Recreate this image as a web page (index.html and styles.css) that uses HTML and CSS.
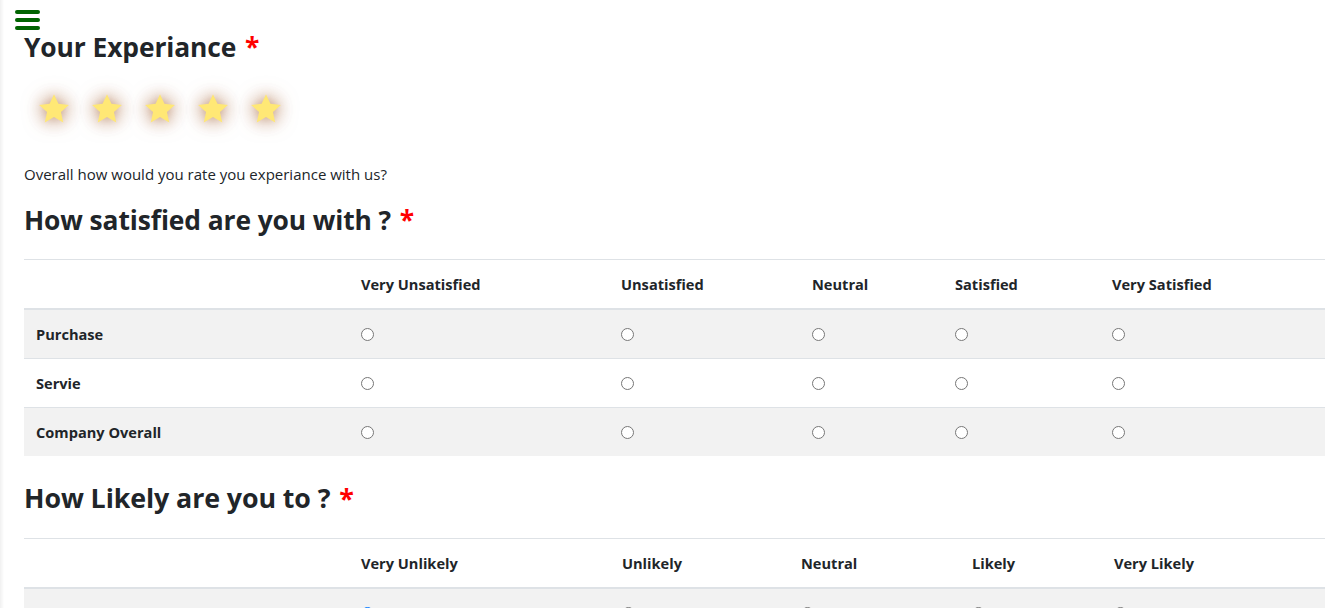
FILE: index.html
```html
<!DOCTYPE html>
<html lang="en">
<head>
<meta charset="utf-8">
<title>Feedback</title>
<link rel="stylesheet" href="styles.css">
</head>
<body>
<div class="edge-shadow"></div>
<button class="menu-toggle" aria-label="Menu">
  <span class="bar"></span><span class="bar"></span><span class="bar"></span>
</button>
<main class="page">
  <h3 class="title">Your Experiance <span class="req">*</span></h3>
  <div class="stars">
    <svg class="star" viewBox="0 0 24 24"><polygon points="12,1.5 15.1,8.3 22.5,9.1 16.9,14.1 18.5,21.5 12,17.7 5.5,21.5 7.1,14.1 1.5,9.1 8.9,8.3"/></svg>
    <svg class="star" viewBox="0 0 24 24"><polygon points="12,1.5 15.1,8.3 22.5,9.1 16.9,14.1 18.5,21.5 12,17.7 5.5,21.5 7.1,14.1 1.5,9.1 8.9,8.3"/></svg>
    <svg class="star" viewBox="0 0 24 24"><polygon points="12,1.5 15.1,8.3 22.5,9.1 16.9,14.1 18.5,21.5 12,17.7 5.5,21.5 7.1,14.1 1.5,9.1 8.9,8.3"/></svg>
    <svg class="star" viewBox="0 0 24 24"><polygon points="12,1.5 15.1,8.3 22.5,9.1 16.9,14.1 18.5,21.5 12,17.7 5.5,21.5 7.1,14.1 1.5,9.1 8.9,8.3"/></svg>
    <svg class="star" viewBox="0 0 24 24"><polygon points="12,1.5 15.1,8.3 22.5,9.1 16.9,14.1 18.5,21.5 12,17.7 5.5,21.5 7.1,14.1 1.5,9.1 8.9,8.3"/></svg>
  </div>
  <p class="hint">Overall how would you rate you experiance with us?</p>

  <h3 class="section">How satisfied are you with ? <span class="req">*</span></h3>
  <table class="grid grid-a">
    <colgroup>
      <col class="c1"><col class="c2"><col class="c3"><col class="c4"><col class="c5"><col>
    </colgroup>
    <thead>
      <tr><th></th><th>Very Unsatisfied</th><th>Unsatisfied</th><th>Neutral</th><th>Satisfied</th><th>Very Satisfied</th></tr>
    </thead>
    <tbody>
      <tr class="odd"><th>Purchase</th><td><input type="radio" name="p"></td><td><input type="radio" name="p"></td><td><input type="radio" name="p"></td><td><input type="radio" name="p"></td><td><input type="radio" name="p"></td></tr>
      <tr><th>Servie</th><td><input type="radio" name="s"></td><td><input type="radio" name="s"></td><td><input type="radio" name="s"></td><td><input type="radio" name="s"></td><td><input type="radio" name="s"></td></tr>
      <tr class="odd"><th>Company Overall</th><td><input type="radio" name="c"></td><td><input type="radio" name="c"></td><td><input type="radio" name="c"></td><td><input type="radio" name="c"></td><td><input type="radio" name="c"></td></tr>
    </tbody>
  </table>

  <h3 class="section likely">How Likely are you to ? <span class="req">*</span></h3>
  <table class="grid grid-b">
    <colgroup>
      <col class="c1"><col class="c2"><col class="c3"><col class="c4"><col class="c5"><col>
    </colgroup>
    <thead>
      <tr><th></th><th>Very Unlikely</th><th>Unlikely</th><th>Neutral</th><th>Likely</th><th>Very Likely</th></tr>
    </thead>
    <tbody>
      <tr class="odd"><th>Recommend us to a friend</th><td><input type="radio" name="r" checked></td><td><input type="radio" name="r"></td><td><input type="radio" name="r"></td><td><input type="radio" name="r"></td><td><input type="radio" name="r"></td></tr>
    </tbody>
  </table>
</main>
</body>
</html>
```
FILE: styles.css
```css
html, body {
  margin: 0;
  padding: 0;
  background: #ffffff;
}
body {
  font-family: "Open Sans", "Noto Sans", "Liberation Sans", sans-serif;
  color: #212529;
  font-size: 15px;
  overflow: hidden;
}
.edge-shadow {
  position: fixed;
  left: 0;
  top: 0;
  bottom: 0;
  width: 4px;
  background: linear-gradient(to right, rgba(0,0,0,0.06), rgba(0,0,0,0));
}
.menu-toggle {
  position: absolute;
  left: 15px;
  top: 10px;
  width: 25px;
  height: 20px;
  padding: 0;
  border: 0;
  background: transparent;
  display: flex;
  flex-direction: column;
  justify-content: space-between;
}
.menu-toggle .bar {
  display: block;
  height: 4px;
  width: 25px;
  border-radius: 2px;
  background: #006400;
}
.page {
  padding: 30px 9px 0 24px;
}
.title, .section {
  margin: 0;
  font-size: 26.4px;
  line-height: 34px;
  font-weight: 700;
  letter-spacing: -0.1px;
}
.section.likely {
  font-size: 26.8px;
}
.req {
  color: #ff0000;
  font-weight: 700;
  margin-left: 2px;
}
.stars {
  display: flex;
  gap: 19px;
  margin: 28px 0 0 13px;
  height: 33px;
}
.star {
  width: 34px;
  height: 34px;
  overflow: visible;
  fill: #ffe875;
  filter: drop-shadow(0 0 10px rgba(150, 75, 30, 0.6)) drop-shadow(0 0 4px rgba(170, 100, 50, 0.35));
}
.hint {
  margin: 38px 0 0;
  font-size: 15px;
  line-height: 22px;
}
.section {
  margin-top: 18px;
  margin-bottom: 22px;
}
.section.likely {
  margin-top: 25px;
  margin-bottom: 23px;
}
.grid {
  width: 100%;
  border-collapse: collapse;
  table-layout: fixed;
  font-size: 14.6px;
}
.grid th, .grid td {
  text-align: left;
  vertical-align: middle;
  padding: 12px;
  line-height: 24px;
  border-top: 1px solid #dee2e6;
}
.grid thead th {
  border-bottom: 2px solid #dee2e6;
  font-weight: 700;
}
.grid tbody th {
  font-weight: 700;
}
.grid tbody tr.odd {
  background: #f2f2f2;
}
.grid input[type="radio"] {
  margin: 0;
  width: 13px;
  height: 13px;
  vertical-align: middle;
  position: relative;
  top: -2px;
}
.grid-a .c1 { width: 325px; }
.grid-a .c2 { width: 260px; }
.grid-a .c3 { width: 191px; }
.grid-a .c4 { width: 143px; }
.grid-a .c5 { width: 157px; }
.grid-b .c1 { width: 325px; }
.grid-b .c2 { width: 261px; }
.grid-b .c3 { width: 179px; }
.grid-b .c4 { width: 171px; }
.grid-b .c5 { width: 142px; }
```
